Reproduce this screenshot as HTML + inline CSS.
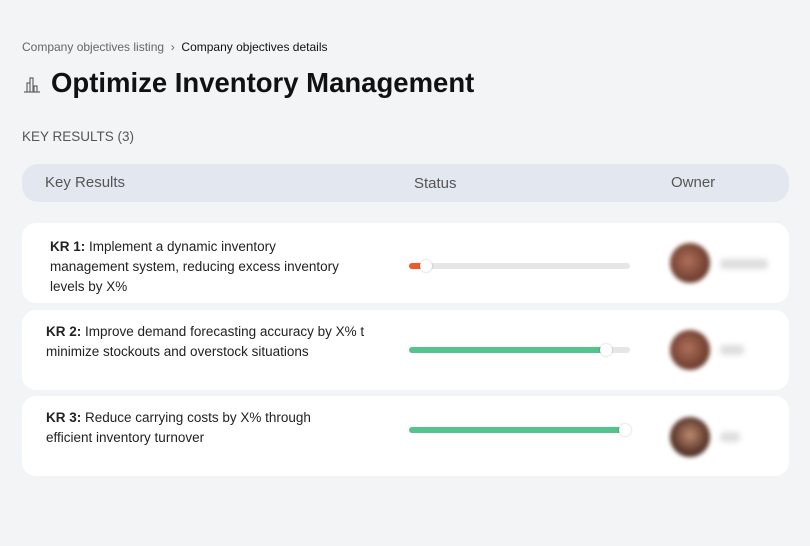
<!DOCTYPE html><html><head><style>
body{margin:0;width:810px;height:546px;background:#f3f4f6;font-family:"Liberation Sans",sans-serif;position:relative;overflow:hidden;color:#111}
.a{position:absolute}
.card{position:absolute;left:22px;width:767px;background:#fff;border-radius:14px}
.t{position:absolute;font-size:13.5px;line-height:20px;color:#222;white-space:nowrap}
.bar{position:absolute;left:409px;width:221px;height:6px;border-radius:3px;background:#e6e6e6}
.fill{position:absolute;left:0;top:0;height:6px;border-radius:3px}
.knob{position:absolute;top:-3px;width:12px;height:12px;border-radius:50%;background:#fff;box-shadow:0 0 2px rgba(0,0,0,.25)}
.av{position:absolute;left:670px;width:40px;height:40px;border-radius:50%;background:radial-gradient(circle at 45% 45%,#b0705a,#6a3a2c 70%);filter:blur(2px)}
.nm{position:absolute;left:720px;width:48px;height:10px;background:#ddd;border-radius:4px;filter:blur(3px)}
</style></head><body>
<div class="a" style="left:22px;top:40px;font-size:12px;color:#666">Company objectives listing &nbsp;›&nbsp; <span style="color:#111">Company objectives details</span></div>
<svg class="a" style="left:23px;top:75px" width="18" height="18" viewBox="0 0 18 18" fill="none" stroke="#666" stroke-width="1.2"><path d="M1 17h16M4 17V8h3v9M7 17V3h3v14M11 17v-6h3v6"/></svg>
<div class="a" style="left:51px;top:67px;font-size:27.5px;font-weight:bold">Optimize Inventory Management</div>
<div class="a" style="left:22px;top:129px;font-size:13.5px;color:#555">KEY RESULTS (3)</div>
<div class="a" style="left:22px;top:164px;width:767px;height:38px;background:#e3e8f0;border-radius:16px;font-size:15px;color:#555">
<span class="a" style="left:23px;top:10px">Key Results</span><span class="a" style="left:392px;top:11px">Status</span><span class="a" style="left:649px;top:10px">Owner</span></div>
<div class="card" style="top:223px;height:80px"></div>
<div class="card" style="top:310px;height:80px"></div>
<div class="card" style="top:396px;height:80px"></div>
<div class="t" style="left:50px;top:237px"><b>KR 1:</b> Implement a dynamic inventory<br>management system, reducing excess inventory<br>levels by X%</div>
<div class="t" style="left:46px;top:322px"><b>KR 2:</b> Improve demand forecasting accuracy by X% t<br>minimize stockouts and overstock situations</div>
<div class="t" style="left:46px;top:408px"><b>KR 3:</b> Reduce carrying costs by X% through<br>efficient inventory turnover</div>
<div class="bar" style="top:263px"><div class="fill" style="width:14px;background:#f05a2a"></div><div class="knob" style="left:11px"></div></div>
<div class="bar" style="top:347px"><div class="fill" style="width:198px;background:#52c48c"></div><div class="knob" style="left:191px"></div></div>
<div class="bar" style="top:427px"><div class="fill" style="width:216px;background:#52c48c"></div><div class="knob" style="left:210px"></div></div>
<div class="av" style="top:243px"></div><div class="nm" style="top:259px"></div>
<div class="av" style="top:330px"></div><div class="nm" style="top:345px;width:24px"></div>
<div class="av" style="top:417px;background:radial-gradient(circle at 50% 45%,#c08a70,#4a2a20 70%)"></div><div class="nm" style="top:432px;width:20px"></div>
</body></html>
